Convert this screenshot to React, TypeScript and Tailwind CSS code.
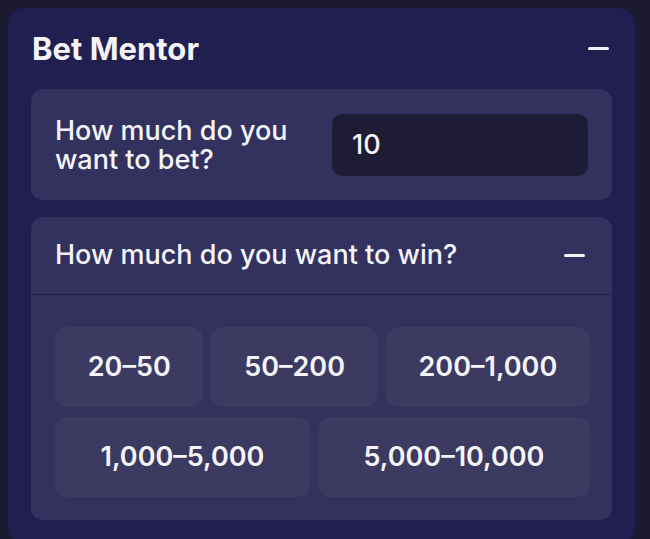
import { useState } from 'react';

const rows = [
  ['20–50', '50–200', '200–1,000'],
  ['1,000–5,000', '5,000–10,000'],
];

function Minus() {
  return <span className="block h-[3px] w-[21px] rounded-full bg-[#f4f4f8]" />;
}

export default function App() {
  const [bet, setBet] = useState('10');

  return (
    <div
      className="min-h-screen bg-[#1b1a31] p-2 text-[#f4f4f8]"
      style={{ fontFamily: 'Inter, "Noto Sans", sans-serif' }}
    >
      <div className="w-[627px] rounded-2xl bg-[#211f50] px-[23px] pb-6">
        {/* Header */}
        <div className="flex h-[81px] items-center justify-between pl-px pr-[3px]">
          <h1 className="text-[31px] font-bold leading-none">Bet Mentor</h1>
          <Minus />
        </div>

        <div className="flex flex-col gap-[17px]">
          {/* Bet amount */}
          <div className="flex h-[111px] items-center justify-between rounded-xl bg-[#33315e] pl-6 pr-6">
            <label className="text-[27px] font-medium leading-[29px]">
              How much do you
              <br />
              want to bet?
            </label>
            <input
              value={bet}
              onChange={(e) => setBet(e.target.value)}
              className="h-[62px] w-[256px] rounded-[10px] bg-[#1e1c34] px-5 text-[27px] font-medium text-[#f4f4f8] outline-none"
            />
          </div>

          {/* Win amount */}
          <div className="rounded-xl bg-[#33315e]">
            <div className="flex h-[78px] items-center justify-between border-b border-[#1f1d48] pl-6 pr-[27px]">
              <span className="text-[27px] font-medium">How much do you want to win?</span>
              <Minus />
            </div>
            <div className="flex flex-col gap-[10px] pb-[23px] pl-6 pr-[22px] pt-8">
              {rows.map((row, i) => (
                <div key={i} className="flex gap-2">
                  {row.map((r) => (
                    <button
                      key={r}
                      className="flex h-[80px] grow items-center justify-center whitespace-nowrap rounded-xl bg-[#3c3a60] px-[32px] text-[27px] font-semibold"
                    >
                      {r}
                    </button>
                  ))}
                </div>
              ))}
            </div>
          </div>
        </div>
      </div>
    </div>
  );
}
